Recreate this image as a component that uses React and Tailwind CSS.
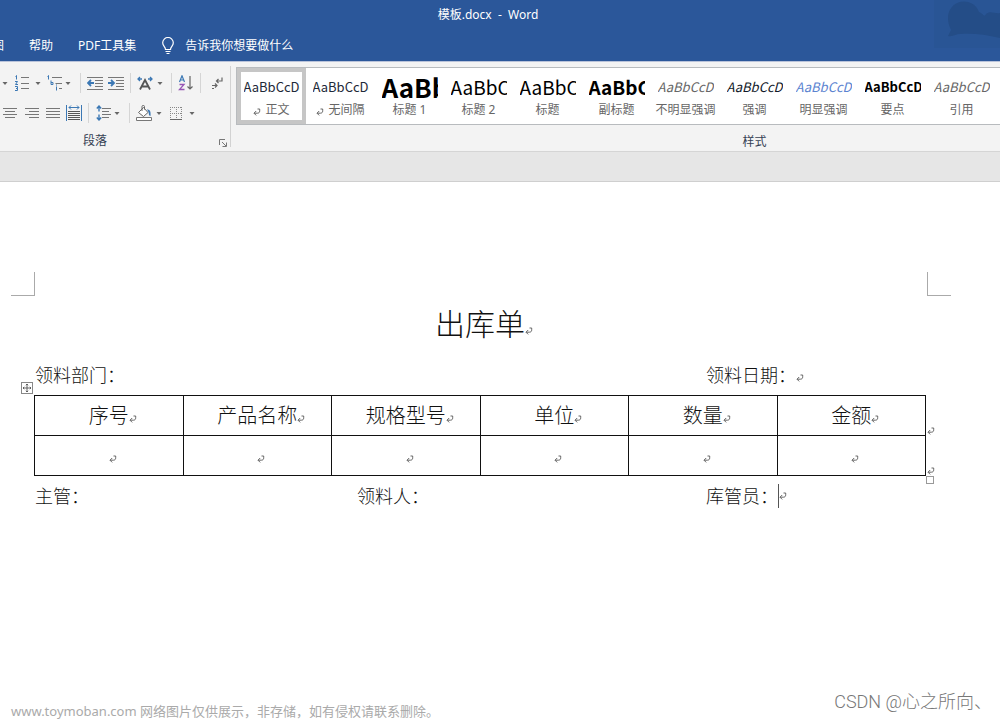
import { clsx } from "clsx";

const styles = [
  { name: "正文", mark: true, active: true, preview: "text-[13px] text-gray-800" },
  { name: "无间隔", mark: true, preview: "text-[13px] text-gray-800" },
  { name: "标题 1", preview: "text-[26px] font-bold text-black" },
  { name: "标题 2", preview: "text-[19px] text-black" },
  { name: "标题", preview: "text-[19px] text-black" },
  { name: "副标题", preview: "text-[19px] font-bold text-black" },
  { name: "不明显强调", preview: "text-[13px] italic text-[#666]" },
  { name: "强调", preview: "text-[13px] italic text-gray-900" },
  { name: "明显强调", preview: "text-[13px] italic text-[#5b83d0]" },
  { name: "要点", preview: "text-[13px] font-bold text-black" },
  { name: "引用", preview: "text-[13px] italic text-[#666]" },
];

const columns = ["序号", "产品名称", "规格型号", "单位", "数量", "金额"];

function Icon({ children, className }) {
  return (
    <svg
      width="16"
      height="16"
      viewBox="0 0 16 16"
      fill="none"
      stroke="#777"
      className={className}
      aria-hidden="true"
    >
      {children}
    </svg>
  );
}

function ToolButton({ label, className, children }) {
  return (
    <button type="button" aria-label={label} className={clsx("w-4 shrink-0", className)}>
      <Icon>{children}</Icon>
    </button>
  );
}

function Caret({ label, className }) {
  return (
    <button type="button" aria-label={label} className={clsx("w-2 shrink-0", className)}>
      <svg width="8" height="16" viewBox="0 0 8 16" aria-hidden="true">
        <path d="M1.500 7h5L4 10z" fill="#666" />
      </svg>
    </button>
  );
}

function Divider({ className }) {
  return <span className={clsx("h-5 w-px shrink-0 bg-[#d5d5d5]", className)} />;
}

function ReturnMark() {
  return (
    <svg
      width="8"
      height="8"
      viewBox="0 0 8 8"
      fill="none"
      stroke="#666"
      className="max-w-none"
      aria-hidden="true"
    >
      <path d="M4.5 1h2.2v1.8c0 1.6-.8 2.4-2.400 2.400H1M3.200 3L1 5.200l2.200 2.200" />
    </svg>
  );
}

// takes no width so the text beside it stays centred
function Return() {
  return (
    <span className="inline-block w-0 align-baseline">
      <ReturnMark />
    </span>
  );
}

function TitleBar() {
  return (
    <header className="relative overflow-hidden border-b border-[#b9c3da] bg-[#2b579a] text-xs text-white">
      <svg
        className="absolute right-0 top-0"
        width="80"
        height="50"
        viewBox="0 0 80 50"
        aria-hidden="true"
      >
        <path d="M14 0h66v48H14z" fill="#28528f" opacity=".4" />
        <path
          d="M28 18a16 16 0 0 1 31-6c5 2 5 6 7 2 4-4 9 0 14-1v25c-15-4-29-5-40-4-4 0-7 3-12 2l3-6c-2-4-3-8-3-12z"
          fill="#244d87"
        />
      </svg>
      <h1 className="whitespace-pre pr-6 text-center leading-[30px]">模板.docx  -  Word</h1>
      <nav className="flex h-[31px] items-center">
        <button type="button" className="-ml-5 w-6 shrink-0">视图</button>
        <button type="button" className="ml-[25px] shrink-0">帮助</button>
        <button type="button" className="ml-[25px] shrink-0">PDF工具集</button>
        <button type="button" className="ml-[25px] flex shrink-0 items-center gap-2.5">
          <svg
            width="14"
            height="18"
            viewBox="0 0 14 18"
            fill="none"
            stroke="#fff"
            strokeWidth="1.2"
            aria-hidden="true"
          >
            <path d="M4.5 12.5c0-3-2.8-3.500-2.800-6.700a5.300 5.300 0 0 1 10.600 0c0 3.200-2.800 3.700-2.800 6.700zM4.500 14.500h5M5.500 16.500h3" />
          </svg>
          告诉我你想要做什么
        </button>
      </nav>
    </header>
  );
}

function ParagraphGroup() {
  return (
    <section className="relative my-1 flex w-[231px] shrink-0 flex-col border-r border-[#d2d2d2]">
      <div className="flex h-8 items-center pl-px pt-0.5">
        <Caret label="项目符号选项" />
        <ToolButton label="编号" className="ml-[5px]">
          <path d="M7 2.500h8M7 8.500h8M7 13.500h8" />
          <path
            d="M1.500 1.500L2.500.5v4M1 6.500h2.500L1.500 9.500H4M1 11.500h2.500v2H2h1.500v2H1"
            stroke="#3c78b4"
          />
        </ToolButton>
        <Caret label="编号选项" className="ml-1" />
        <ToolButton label="多级列表" className="ml-[5px]">
          <path d="M5 2.500h10M8.500 8.500H15M12 13.500h3" />
          <path d="M.5 1.500l1-1v4M4 5.500v4h2v-2H4M9.500 11.500v4M9.500 9.500v1" stroke="#3c78b4" />
        </ToolButton>
        <Caret label="多级列表选项" className="ml-px" />
        <Divider className="ml-2" />
        <ToolButton label="减少缩进量" className="ml-1.5">
          <path d="M0 2.500h16M8 5.500h8M8 8.500h8M8 11.500h8M0 14.500h16" />
          <path d="M7 8H1M4 5L1 8l3 3" stroke="#3c78b4" strokeWidth="1.8" />
        </ToolButton>
        <ToolButton label="增加缩进量" className="ml-[5px]">
          <path d="M0 2.500h16M8 5.500h8M8 8.500h8M8 11.500h8M0 14.500h16" />
          <path d="M0 8h6M3 5l3 3-3 3" stroke="#3c78b4" strokeWidth="1.8" />
        </ToolButton>
        <Divider className="ml-1.5" />
        <ToolButton label="中文版式" className="ml-1.5">
          <path d="M3 14.500L8 5l5 9.500M5 11.500h6" stroke="#555" strokeWidth="1.800" />
          <path d="M5 4H1M3 2L1 4l2 2M11 4h4M13 2l2 2-2 2" stroke="#3c78b4" strokeWidth="1.300" />
        </ToolButton>
        <Caret label="中文版式选项" className="ml-[3px]" />
        <Divider className="ml-[7px]" />
        <ToolButton label="排序" className="ml-1.5">
          <path d="M1.500 7L4 .8 6.500 7M2.500 5h3" stroke="#3c78b4" strokeWidth="1.200" />
          <path d="M1.500 9.500h4.500l-4.500 5H6.500" stroke="#9656b5" strokeWidth="1.300" />
          <path d="M12 1v13M9.500 11.500L12 14l2.500-2.500" stroke="#666" strokeWidth="1.200" />
        </ToolButton>
        <Divider className="ml-1.5" />
        <ToolButton label="显示编辑标记" className="ml-2">
          <path
            d="M13 2.500v3.500H7.500M9.500 4L7.500 6l2 2M3 10.500h5M6 8.500l2 2-2 2M3 13.500h2"
            stroke="#666"
            strokeWidth="1.200"
          />
        </ToolButton>
      </div>
      <div className="flex h-7 items-center pl-0.5 pt-1">
        <ToolButton label="居中">
          <path d="M1 3.500h14M3 6.500h10M1 9.500h14M3 12.500h10" />
        </ToolButton>
        <ToolButton label="右对齐" className="ml-1.5">
          <path d="M1 3.500h14M5 6.500h10M1 9.500h14M5 12.500h10" />
        </ToolButton>
        <ToolButton label="两端对齐" className="ml-[5px]">
          <path d="M1 3.500h14M1 6.500h14M1 9.500h14M1 12.500h14" />
        </ToolButton>
        <ToolButton label="分散对齐" className="ml-[5px]">
          <path d="M2 6.500h12M2 8.500h12M2 10.500h12M2 12.500h12M2 14.500h12" stroke="#555" />
          <path d="M.5 0v16M15.500 0v16M3 2.500h10M5 .5l-2 2 2 2M11 .5l2 2-2 2" stroke="#3c78b4" />
        </ToolButton>
        <Divider className="ml-1.5" />
        <ToolButton label="行距" className="ml-[7px]">
          <path d="M6 3.500h9M6 6.500h7M6 9.500h9M6 12.500h7" />
          <path
            d="M3 1v5.500M.8 3.500L3 1l2.200 2.500M3 9.500V15M.8 12.500L3 15l2.200-2.500"
            stroke="#3c78b4"
            strokeWidth="1.400"
          />
        </ToolButton>
        <Caret label="行距选项" className="ml-px" />
        <Divider className="ml-2" />
        <ToolButton label="底纹" className="ml-1.5">
          <path d="M2.500 7.500L7.500 2.500l4.500 5-4.500 4z" fill="#fff" stroke="#666" />
          <path d="M6 6V1.500c0-1.500 2.500-1.500 2.500 0v3" stroke="#666" />
          <path d="M11 4.500c3 0 4 2 3.500 6.500-2 0-1.500-3-2-4z" fill="#3c78b4" stroke="none" />
          <path d="M.5 12.500h15v3H.5z" fill="#fff" />
        </ToolButton>
        <Caret label="底纹选项" className="ml-[3px]" />
        <ToolButton label="边框" className="ml-[5px]">
          <path
            d="M2 2.500h12M2.500 2v12M13.500 2v12M2 8.500h12M8.500 2v12"
            fill="#fff"
            stroke="#888"
            strokeDasharray="1 1"
          />
          <path d="M2 14.500h12" stroke="#666" />
        </ToolButton>
        <Caret label="边框选项" className="ml-1" />
      </div>
      <h2 className="mt-2.5 pr-10 text-center text-xs leading-3 text-gray-700">段落</h2>
      <button type="button" aria-label="段落设置" className="absolute bottom-0 right-[3px]">
        <svg width="8" height="8" viewBox="0 0 8 8" fill="none" stroke="#777" aria-hidden="true">
          <path d="M.5 6V.5H6M3 3l4 4M7.500 3.500v4h-4" />
        </svg>
      </button>
    </section>
  );
}

function StyleItem({ item }) {
  return (
    <button
      type="button"
      className={clsx(
        "flex w-[69px] shrink-0 flex-col items-center border-4",
        item.active ? "border-[#c6c6c6]" : "border-transparent"
      )}
    >
      <span
        className={clsx(
          "flex h-[30px] w-14 items-center overflow-hidden whitespace-nowrap font-['Noto_Sans_CJK_SC',sans-serif] leading-[30px]",
          item.preview
        )}
      >
        AaBbCcDd
      </span>
      <span className="flex items-center gap-1 whitespace-nowrap text-xs leading-4 text-[#666]">
        {item.mark && (
          <span className="pt-1">
            <ReturnMark />
          </span>
        )}
        {item.name}
      </span>
    </button>
  );
}

function StylesGroup() {
  return (
    <section className="min-w-0 flex-1 overflow-hidden pl-[5px] pt-[5px]">
      <div className="w-[1037px]">
        <div className="flex h-[58px] border border-[#b8bbbe] bg-white">
          {styles.map((item) => (
            <StyleItem key={item.name} item={item} />
          ))}
        </div>
        <h2 className="mt-[9px] text-center text-xs leading-4 text-gray-700">样式</h2>
      </div>
    </section>
  );
}

function Document() {
  return (
    <main className="flex flex-1 flex-col pt-[90px] text-[#111]">
      <div className="flex justify-between pl-[11px] pr-[49px]">
        <span className="size-6 border-b border-r border-[#aaa]" />
        <span className="size-6 border-b border-l border-[#aaa]" />
      </div>
      <article className="ml-[34px] mr-[74px] text-lg font-light">
        <h2 className="mt-1.5 text-center text-3xl leading-[44px]">
          出库单
          <Return />
        </h2>
        <div className="mt-[15px] grid grid-cols-[322fr_349fr_221fr] leading-7">
          <p className="col-span-2 pl-px">领料部门：</p>
          <p className="pl-px">
            领料日期：
            <Return />
          </p>
        </div>
        <div className="relative mt-1.5">
          <span className="absolute -left-[13px] -top-[13px] flex size-3 items-center justify-center border border-[#888] bg-white">
            <svg
              width="10"
              height="10"
              viewBox="0 0 10 10"
              fill="none"
              stroke="#555"
              strokeWidth="0.9"
              className="shrink-0"
              aria-hidden="true"
            >
              <path d="M5 1v8M1 5h8M3.800 2.200L5 1l1.200 1.200M3.800 7.800L5 9l1.200-1.200M2.200 3.800L1 5l1.200 1.200M7.800 3.800L9 5 7.800 6.200" />
            </svg>
          </span>
          <table className="w-full table-fixed border-collapse text-center text-xl">
            <thead>
              <tr className="h-10">
                {columns.map((column) => (
                  <th key={column} className="border border-[#111] p-0 font-light">
                    {column}
                    <Return />
                  </th>
                ))}
              </tr>
            </thead>
            <tbody>
              <tr className="h-10">
                {columns.map((column) => (
                  <td key={column} className="border border-[#111] p-0">
                    <Return />
                  </td>
                ))}
              </tr>
            </tbody>
          </table>
          <div className="absolute left-full top-0 flex h-full flex-col pl-px text-xs leading-4">
            <span className="flex flex-1 items-end pb-px">
              <Return />
            </span>
            <span className="flex flex-1 items-end pb-px">
              <Return />
            </span>
          </div>
          <span className="absolute left-full top-full size-2 border border-[#999] bg-white" />
        </div>
        <div className="mt-1.5 grid grid-cols-[322fr_349fr_221fr] leading-7">
          <p className="pl-px">主管：</p>
          <p className="pl-px">领料人：</p>
          <p className="flex items-center pl-px">
            库管员：
            <span className="h-6 w-px bg-[#555]" />
            <Return />
          </p>
        </div>
      </article>
      <footer className="mt-auto flex items-end justify-between pl-[11px] pr-2">
        <p className="text-[13px] leading-[18px] text-[#aaa]">
          www.toymoban.com 网络图片仅供展示，非存储，如有侵权请联系删除。
        </p>
        <p className="pb-1 font-['Roboto','Noto_Sans_CJK_SC',sans-serif] text-lg font-light leading-7 text-[#777]">
          CSDN @心之所向、
        </p>
      </footer>
    </main>
  );
}

export default function App() {
  return (
    <div className="flex min-h-screen flex-col overflow-x-hidden bg-white font-['Noto_Sans','Noto_Sans_CJK_SC',sans-serif]">
      <TitleBar />
      <div className="flex h-[90px] border-b border-[#d5d5d5] bg-[#f3f3f3]">
        <ParagraphGroup />
        <StylesGroup />
      </div>
      <div className="h-[30px] border-b border-[#cfcfcf] bg-[#e6e6e6]" />
      <Document />
    </div>
  );
}
